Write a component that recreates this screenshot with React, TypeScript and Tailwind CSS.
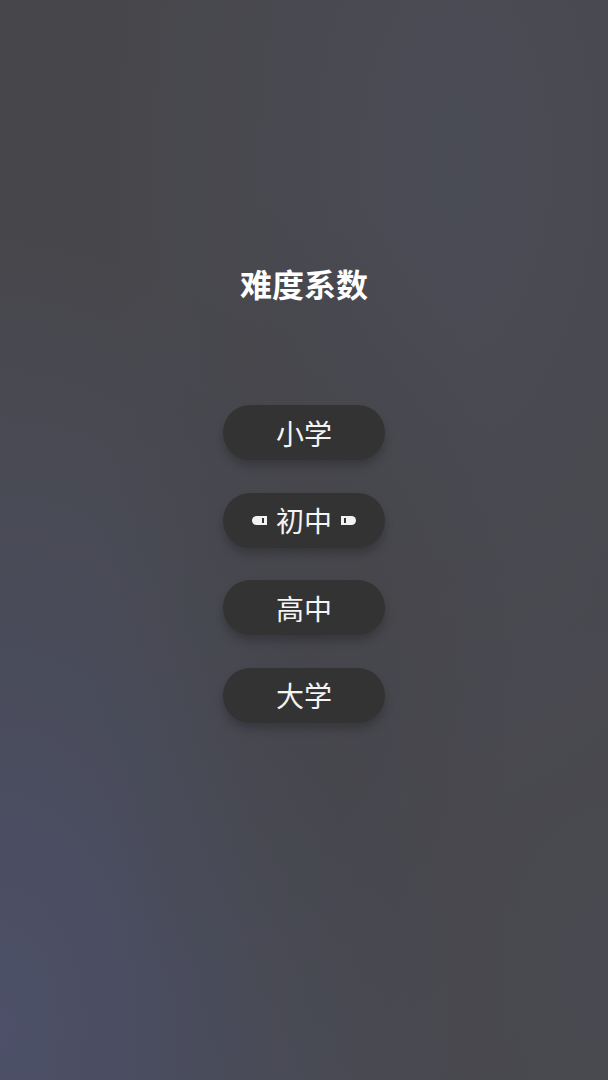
const levels = [
  { label: "小学", active: false },
  { label: "初中", active: true },
  { label: "高中", active: false },
  { label: "大学", active: false },
];

function PillMark({ side }: { side: "left" | "right" }) {
  // little white capsule beside the selected level
  return (
    <span
      className={`relative inline-block h-[9px] w-[15px] bg-[#f2f2f2] ${
        side === "left" ? "rounded-l-full rounded-r-[2px]" : "rounded-r-full rounded-l-[2px]"
      }`}
    >
      <span
        className={`absolute top-[2px] h-[5px] w-[2px] bg-[#333] ${
          side === "left" ? "right-[3px]" : "left-[3px]"
        }`}
      />
    </span>
  );
}

export default function App() {
  return (
    <div
      className="relative h-[1080px] w-[608px] overflow-hidden bg-[#47474b]"
      style={{ fontFamily: '"Noto Sans CJK SC", "Noto Sans", sans-serif' }}
    >
      <div className="absolute inset-0 bg-[radial-gradient(ellipse_at_0%_95%,#4c5068_0%,rgba(76,80,104,0.5)_28%,rgba(71,71,75,0)_55%)]" />
      <div className="absolute inset-0 bg-[radial-gradient(ellipse_at_75%_15%,rgba(76,78,92,0.6)_0%,rgba(71,71,75,0)_55%)]" />
      <div className="absolute inset-0 bg-[radial-gradient(ellipse_at_100%_90%,rgba(74,74,84,0.6)_0%,rgba(71,71,75,0)_45%)]" />
      <div className="absolute inset-0 bg-[radial-gradient(ellipse_at_50%_60%,rgba(66,66,68,0.45)_0%,rgba(71,71,75,0)_50%)]" />

      <div className="relative flex flex-col items-center pt-[263px]">
        <h1 className="text-[32px] leading-10 font-bold text-white">难度系数</h1>

        <div className="mt-[102px] flex flex-col gap-[32.5px]">
          {levels.map((level) => (
            <button
              key={level.label}
              className="flex h-[55px] w-[162px] items-center justify-center gap-[9px] rounded-full bg-[#333333] text-[28px] leading-none text-[#f4f4f4] shadow-[0_6px_10px_rgba(0,0,0,0.22)]"
            >
              {level.active && <PillMark side="left" />}
              <span>{level.label}</span>
              {level.active && <PillMark side="right" />}
            </button>
          ))}
        </div>
      </div>
    </div>
  );
}
